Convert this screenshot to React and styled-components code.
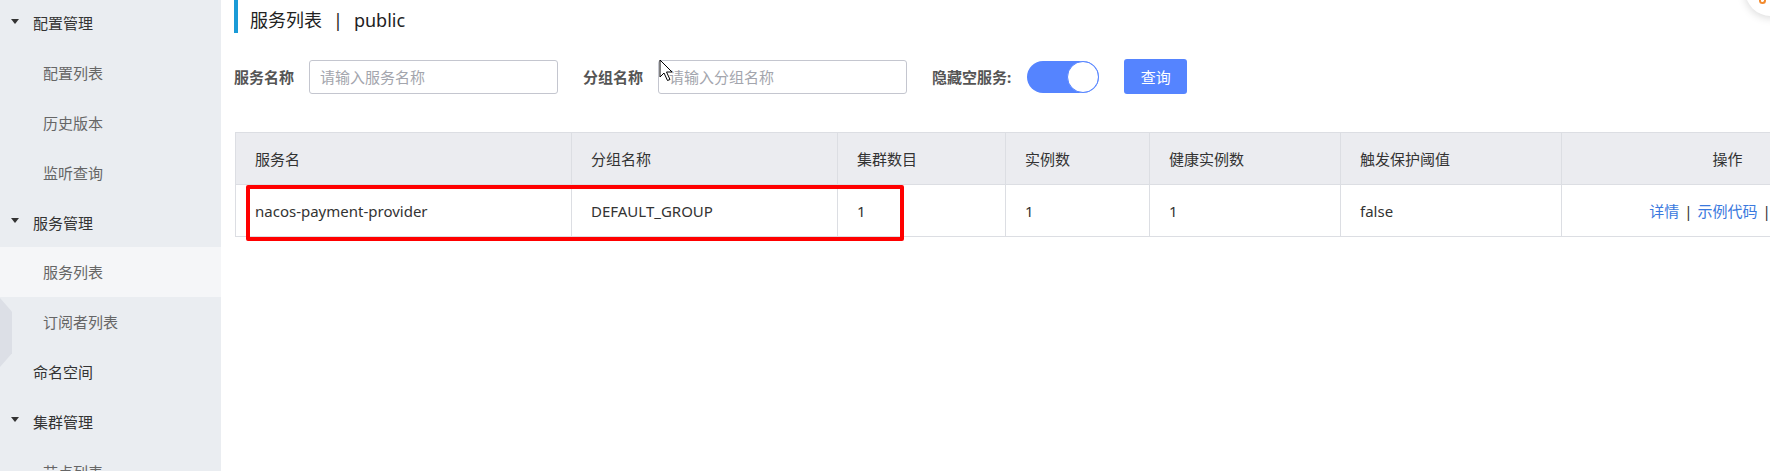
import React from "react";
import styled, { createGlobalStyle } from "styled-components";

const GlobalStyle = createGlobalStyle`
  html, body { margin: 0; padding: 0; overflow: hidden; background: #fff; }
  body { font-family: "Noto Sans", "Noto Sans CJK SC", sans-serif; }
  * { box-sizing: border-box; }
`;

const Layout = styled.div`
  display: flex;
  width: 1770px;
  height: 471px;
  overflow: hidden;
  position: relative;
`;

const Sidebar = styled.nav`
  width: 221px;
  flex: none;
  background: #eaedf1;
  position: relative;
`;

const NavList = styled.div`
  margin-top: -2px;
`;

const NavItem = styled.div`
  height: 49.8px;
  display: flex;
  align-items: center;
  position: relative;
  padding-left: ${(p) => (p.$sub ? 43 : 33)}px;
  background: ${(p) => (p.$active ? "#f5f6f8" : "transparent")};
  color: ${(p) => (p.$sub ? "#666" : "#333")};
  font-size: 15px;
  white-space: nowrap;
`;

const Caret = styled.span`
  position: absolute;
  left: 11px;
  top: 50%;
  margin-top: -4px;
  width: 0;
  height: 0;
  border-left: 4.5px solid transparent;
  border-right: 4.5px solid transparent;
  border-top: 5px solid #333;
`;

const CollapseTab = styled.div`
  position: absolute;
  left: 0;
  top: 298px;
  width: 12px;
  height: 69px;
  background: #dcdfe6;
  clip-path: polygon(0 0, 100% 20%, 100% 80%, 0 100%);
`;

const Main = styled.main`
  flex: 1;
  min-width: 0;
  padding-left: 13px;
`;

const TitleBar = styled.div`
  height: 33px;
  border-left: 4px solid #1a9bd7;
  padding-left: 12px;
  display: flex;
  align-items: flex-end;
  font-size: 18px;
  line-height: 26px;
  color: #222;
`;

const TitleSep = styled.span`
  margin: 0 11px;
`;

const SearchForm = styled.form`
  display: flex;
  align-items: center;
  gap: 25px;
  margin-top: 26px;
  height: 35px;
`;

const FormItem = styled.div`
  display: flex;
  align-items: center;
  gap: 15px;
`;

const Label = styled.label`
  font-size: 15px;
  font-weight: 700;
  color: #555;
  white-space: nowrap;
`;

const Input = styled.input`
  width: 249px;
  height: 34px;
  border: 1px solid #c4c6cf;
  border-radius: 3px;
  padding: 0 10px;
  font-family: inherit;
  font-size: 15px;
  color: #333;
  outline: none;
  &::placeholder { color: #a3a5ad; }
`;

const Switch = styled.span`
  width: 72px;
  height: 32px;
  border-radius: 16px;
  background: #5584ff;
  display: flex;
  justify-content: flex-end;
  margin-left: 1px;
`;

const Knob = styled.span`
  width: 32px;
  height: 32px;
  border-radius: 50%;
  background: #fff;
  border: 1px solid #5584ff;
`;

const Button = styled.button`
  width: 63px;
  height: 35px;
  border: none;
  border-radius: 3px;
  background: #5584ff;
  color: #fff;
  font-family: inherit;
  font-size: 15px;
`;

const TableWrap = styled.div`
  position: relative;
  margin-top: 38px;
  margin-left: 1px;
  width: 1658px;
`;

const Table = styled.table`
  width: 1658px;
  table-layout: fixed;
  border-collapse: collapse;
  font-size: 15px;
  color: #333;
`;

const Th = styled.th`
  height: 52px;
  padding: 0 19px;
  background: #ebecf0;
  border: 1px solid #dcdee3;
  font-weight: 400;
  text-align: ${(p) => (p.$center ? "center" : "left")};
  white-space: nowrap;
`;

const Td = styled.td`
  height: 52px;
  padding: 0 19px;
  border: 1px solid #dcdee3;
  text-align: ${(p) => (p.$center ? "center" : "left")};
  white-space: nowrap;
`;

const Link = styled.a`
  color: #3a79de;
  text-decoration: none;
`;

const LinkSep = styled.span`
  color: #333;
  margin: 0 5px;
`;

const Highlight = styled.div`
  position: absolute;
  left: 11px;
  top: 53px;
  width: 658px;
  height: 56px;
  border: 4px solid #ff0000;
  border-radius: 2px;
  pointer-events: none;
`;

const Cursor = styled.svg`
  position: absolute;
  left: 659px;
  top: 59px;
`;

const FloatButton = styled.div`
  position: absolute;
  left: 1745px;
  top: -36px;
  width: 52px;
  height: 52px;
  border-radius: 50%;
  background: #fff;
  box-shadow: 0 2px 8px rgba(0, 0, 0, 0.15);
`;

const FloatIcon = styled.span`
  position: absolute;
  left: 14px;
  top: 34px;
  width: 7px;
  height: 6px;
  border: 2px solid #f28a2e;
  border-top: none;
  border-radius: 0 0 4px 4px;
`;

const navItems = [
  { label: "配置管理", caret: true },
  { label: "配置列表", sub: true },
  { label: "历史版本", sub: true },
  { label: "监听查询", sub: true },
  { label: "服务管理", caret: true },
  { label: "服务列表", sub: true, active: true },
  { label: "订阅者列表", sub: true },
  { label: "命名空间" },
  { label: "集群管理", caret: true },
  { label: "节点列表", sub: true },
];

const columns = [
  { title: "服务名", width: 336 },
  { title: "分组名称", width: 266 },
  { title: "集群数目", width: 168 },
  { title: "实例数", width: 144 },
  { title: "健康实例数", width: 191 },
  { title: "触发保护阈值", width: 221 },
  { title: "操作", width: 332, center: true },
];

const row = ["nacos-payment-provider", "DEFAULT_GROUP", "1", "1", "1", "false"];

export default function App() {
  return (
    <>
      <GlobalStyle />
      <Layout>
        <Sidebar>
          <NavList>
            {navItems.map((it) => (
              <NavItem key={it.label} $sub={it.sub} $active={it.active}>
                {it.caret && <Caret />}
                {it.label}
              </NavItem>
            ))}
          </NavList>
          <CollapseTab />
        </Sidebar>
        <Main>
          <TitleBar>
            <span>服务列表</span>
            <TitleSep>|</TitleSep>
            <span>public</span>
          </TitleBar>
          <SearchForm onSubmit={(e) => e.preventDefault()}>
            <FormItem>
              <Label>服务名称</Label>
              <Input placeholder="请输入服务名称" />
            </FormItem>
            <FormItem>
              <Label>分组名称</Label>
              <Input placeholder="请输入分组名称" />
            </FormItem>
            <FormItem>
              <Label>隐藏空服务:</Label>
              <Switch>
                <Knob />
              </Switch>
            </FormItem>
            <Button type="submit">查询</Button>
          </SearchForm>
          <TableWrap>
            <Table>
              <colgroup>
                {columns.map((c) => (
                  <col key={c.title} style={{ width: c.width }} />
                ))}
              </colgroup>
              <thead>
                <tr>
                  {columns.map((c) => (
                    <Th key={c.title} $center={c.center}>
                      {c.title}
                    </Th>
                  ))}
                </tr>
              </thead>
              <tbody>
                <tr>
                  {row.map((v, i) => (
                    <Td key={i}>{v}</Td>
                  ))}
                  <Td $center>
                    <Link href="#">详情</Link>
                    <LinkSep>|</LinkSep>
                    <Link href="#">示例代码</Link>
                    <LinkSep>|</LinkSep>
                    <Link href="#">删除</Link>
                  </Td>
                </tr>
              </tbody>
            </Table>
            <Highlight />
          </TableWrap>
        </Main>
        <Cursor width="16" height="24" viewBox="0 0 16 24">
          <path
            d="M1 1 L1 18 L5 14 L8.5 21.5 L11 20.5 L7.5 13 L13 13 Z"
            fill="#fff"
            stroke="#000"
            strokeWidth="1"
            strokeLinejoin="miter"
          />
        </Cursor>
        <FloatButton>
          <FloatIcon />
        </FloatButton>
      </Layout>
    </>
  );
}
